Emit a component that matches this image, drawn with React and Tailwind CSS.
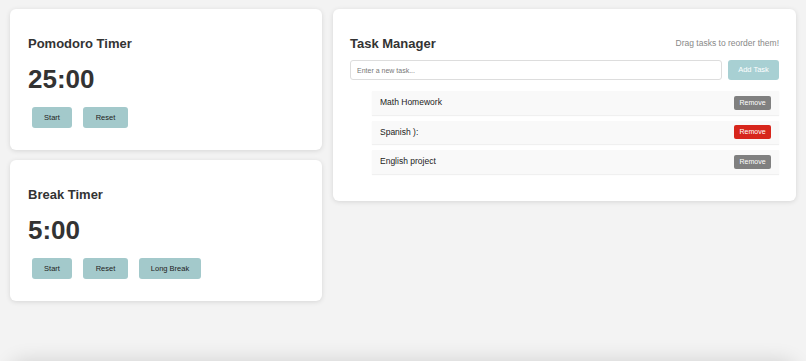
import React from "react";

const tasks = [
  { name: "Math Homework", hot: false },
  { name: "Spanish ):", hot: true },
  { name: "English project", hot: false },
];

function TimerButton({ label, width }) {
  return (
    <button
      className={`${width} h-[21px] rounded-[3px] bg-[#a3c9cb] text-[7.5px] text-[#222]`}
    >
      {label}
    </button>
  );
}

function TimerCard({ title, time, buttons }) {
  return (
    <div className="bg-white rounded-[6px] shadow-[0_1px_5px_rgba(0,0,0,0.12)] px-[18px] pt-[27px] pb-[22px]">
      <h2 className="text-[13px] leading-[15px] font-bold text-[#333]">{title}</h2>
      <div className="mt-[13px] text-[26px] leading-[30px] font-bold text-[#333]">{time}</div>
      <div className="mt-[13px] flex gap-[11px] pl-[4px]">
        {buttons.map((b) => (
          <TimerButton key={b.label} label={b.label} width={b.width} />
        ))}
      </div>
    </div>
  );
}

export default function App() {
  return (
    <div
      className="h-[361px] overflow-hidden bg-[#f3f3f3] px-[10px] pt-[9px]"
      style={{ fontFamily: '"Liberation Sans", Arial, sans-serif' }}
    >
      <div className="grid grid-cols-[312px_1fr] gap-[11px] items-start">
        {/* Timers */}
        <div className="flex flex-col gap-[10px]">
          <TimerCard
            title="Pomodoro Timer"
            time="25:00"
            buttons={[
              { label: "Start", width: "w-[40px]" },
              { label: "Reset", width: "w-[45px]" },
            ]}
          />
          <TimerCard
            title="Break Timer"
            time="5:00"
            buttons={[
              { label: "Start", width: "w-[40px]" },
              { label: "Reset", width: "w-[45px]" },
              { label: "Long Break", width: "w-[62px]" },
            ]}
          />
        </div>

        {/* Task manager */}
        <div className="bg-white rounded-[6px] shadow-[0_1px_5px_rgba(0,0,0,0.12)] pl-[17px] pr-[17px] pt-[27px] pb-[27px]">
          <div className="flex items-center justify-between">
            <h2 className="text-[13px] leading-[15px] font-bold text-[#333]">Task Manager</h2>
            <span className="text-[8.5px] text-[#888]">Drag tasks to reorder them!</span>
          </div>
          <div className="mt-[9px] flex gap-[6px]">
            <input
              className="flex-1 h-[20px] border border-[#ddd] rounded-[3px] px-[6px] text-[7px] outline-none placeholder:text-[#777]"
              placeholder="Enter a new task..."
            />
            <button className="w-[51px] h-[20px] rounded-[3px] bg-[#a8d0d3] text-white text-[7.5px]">
              Add Task
            </button>
          </div>
          <ul className="mt-[11px] ml-[22px] flex flex-col gap-[6px]">
            {tasks.map((t) => (
              <li
                key={t.name}
                className="h-[23.5px] flex items-center justify-between bg-[#f9f9f9] shadow-[0_1px_1px_rgba(0,0,0,0.06)] pl-[8px] pr-[8px]"
              >
                <span className="text-[8.5px] text-[#222]">{t.name}</span>
                <button
                  className={`w-[37px] h-[14px] rounded-[2px] text-white text-[7px] ${
                    t.hot ? "bg-[#d7261c]" : "bg-[#808080]"
                  }`}
                >
                  Remove
                </button>
              </li>
            ))}
          </ul>
        </div>
      </div>

      {/* Next section, just below the fold */}
      <div className="mt-[60px] h-[40px] rounded-[14px] bg-[#f3f3f3] shadow-[0_0_20px_rgba(0,0,0,0.14)]" />
    </div>
  );
}
